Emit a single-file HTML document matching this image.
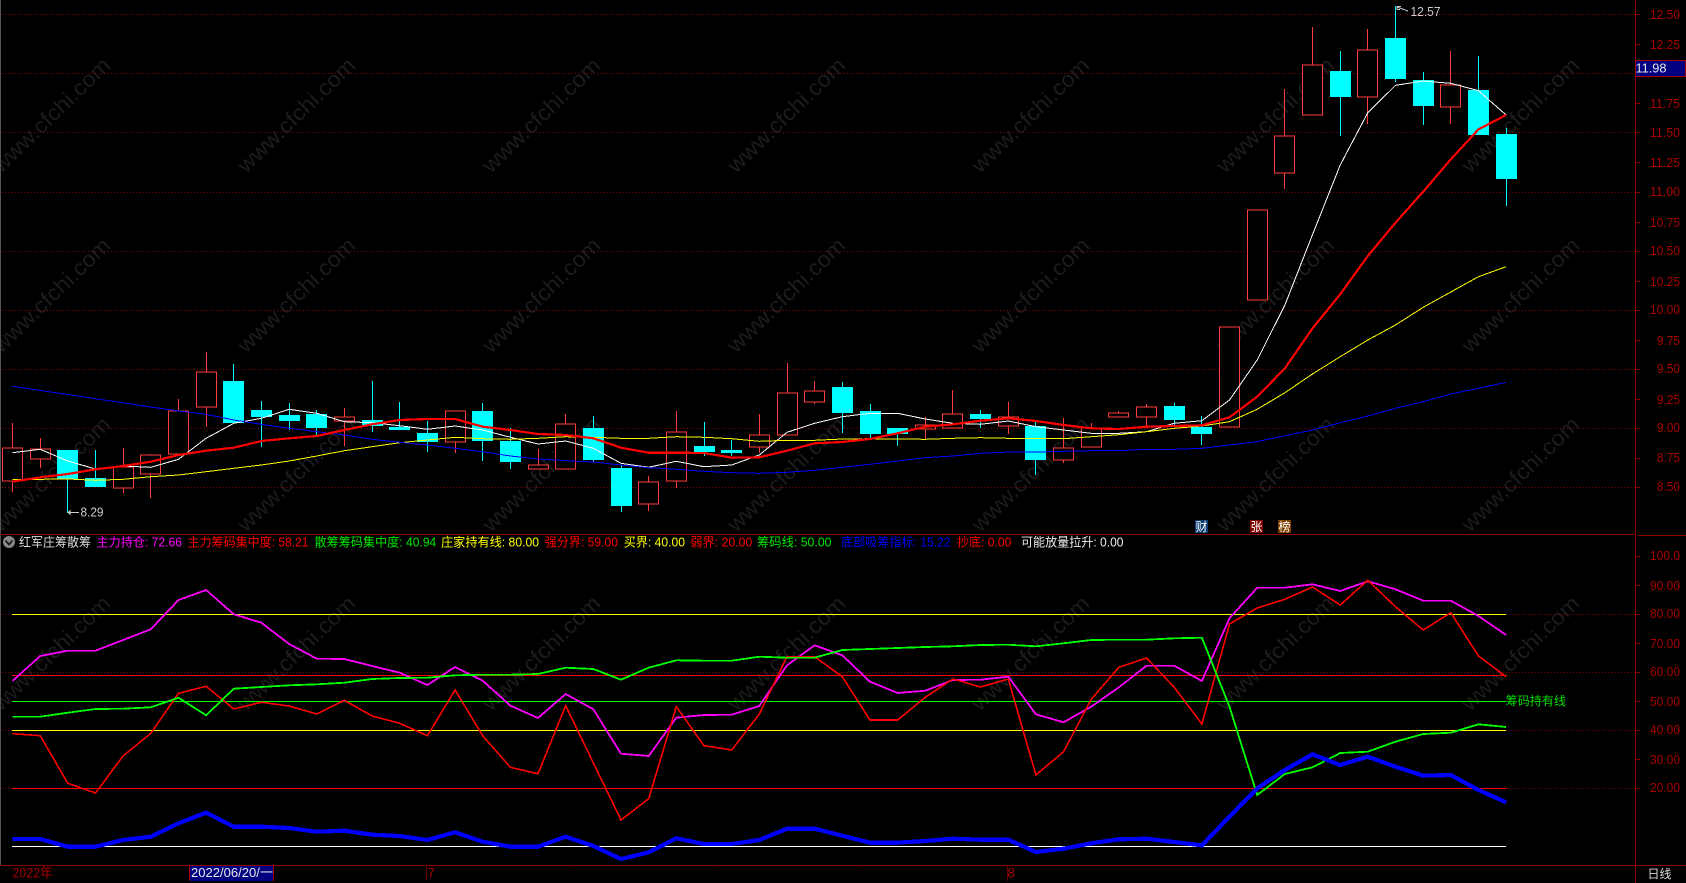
<!DOCTYPE html>
<html lang="zh">
<head>
<meta charset="utf-8">
<title>红军庄筹散筹</title>
<style>
html,body{margin:0;padding:0;background:#000;width:1686px;height:883px;overflow:hidden}
svg{display:block}
text{font-family:"Liberation Sans","Noto Sans CJK SC",sans-serif}
.wm text{font-size:22px;fill:#1c1c1c}
.ax text{font-size:13px;fill:#a80000;text-anchor:end}
.inf text{font-size:12.5px}
.tag text{font-size:12px;fill:#fff}
</style>
</head>
<body>
<svg width="1686" height="883" viewBox="0 0 1686 883" xmlns="http://www.w3.org/2000/svg">
<rect width="1686" height="883" fill="#000"/>

<!-- watermarks -->
<g class="wm">
<text transform="translate(1 174) rotate(-44)" textLength="154" lengthAdjust="spacingAndGlyphs">www.cfchi.com</text>
<text transform="translate(246 174) rotate(-44)" textLength="154" lengthAdjust="spacingAndGlyphs">www.cfchi.com</text>
<text transform="translate(491 174) rotate(-44)" textLength="154" lengthAdjust="spacingAndGlyphs">www.cfchi.com</text>
<text transform="translate(736 174) rotate(-44)" textLength="154" lengthAdjust="spacingAndGlyphs">www.cfchi.com</text>
<text transform="translate(980 174) rotate(-44)" textLength="154" lengthAdjust="spacingAndGlyphs">www.cfchi.com</text>
<text transform="translate(1225 174) rotate(-44)" textLength="154" lengthAdjust="spacingAndGlyphs">www.cfchi.com</text>
<text transform="translate(1470 174) rotate(-44)" textLength="154" lengthAdjust="spacingAndGlyphs">www.cfchi.com</text>
<text transform="translate(1 354) rotate(-44)" textLength="154" lengthAdjust="spacingAndGlyphs">www.cfchi.com</text>
<text transform="translate(246 354) rotate(-44)" textLength="154" lengthAdjust="spacingAndGlyphs">www.cfchi.com</text>
<text transform="translate(491 354) rotate(-44)" textLength="154" lengthAdjust="spacingAndGlyphs">www.cfchi.com</text>
<text transform="translate(736 354) rotate(-44)" textLength="154" lengthAdjust="spacingAndGlyphs">www.cfchi.com</text>
<text transform="translate(980 354) rotate(-44)" textLength="154" lengthAdjust="spacingAndGlyphs">www.cfchi.com</text>
<text transform="translate(1225 354) rotate(-44)" textLength="154" lengthAdjust="spacingAndGlyphs">www.cfchi.com</text>
<text transform="translate(1470 354) rotate(-44)" textLength="154" lengthAdjust="spacingAndGlyphs">www.cfchi.com</text>
<text transform="translate(1 533) rotate(-44)" textLength="154" lengthAdjust="spacingAndGlyphs">www.cfchi.com</text>
<text transform="translate(246 533) rotate(-44)" textLength="154" lengthAdjust="spacingAndGlyphs">www.cfchi.com</text>
<text transform="translate(491 533) rotate(-44)" textLength="154" lengthAdjust="spacingAndGlyphs">www.cfchi.com</text>
<text transform="translate(736 533) rotate(-44)" textLength="154" lengthAdjust="spacingAndGlyphs">www.cfchi.com</text>
<text transform="translate(980 533) rotate(-44)" textLength="154" lengthAdjust="spacingAndGlyphs">www.cfchi.com</text>
<text transform="translate(1225 533) rotate(-44)" textLength="154" lengthAdjust="spacingAndGlyphs">www.cfchi.com</text>
<text transform="translate(1470 533) rotate(-44)" textLength="154" lengthAdjust="spacingAndGlyphs">www.cfchi.com</text>
<text transform="translate(1 712) rotate(-44)" textLength="154" lengthAdjust="spacingAndGlyphs">www.cfchi.com</text>
<text transform="translate(246 712) rotate(-44)" textLength="154" lengthAdjust="spacingAndGlyphs">www.cfchi.com</text>
<text transform="translate(491 712) rotate(-44)" textLength="154" lengthAdjust="spacingAndGlyphs">www.cfchi.com</text>
<text transform="translate(736 712) rotate(-44)" textLength="154" lengthAdjust="spacingAndGlyphs">www.cfchi.com</text>
<text transform="translate(980 712) rotate(-44)" textLength="154" lengthAdjust="spacingAndGlyphs">www.cfchi.com</text>
<text transform="translate(1225 712) rotate(-44)" textLength="154" lengthAdjust="spacingAndGlyphs">www.cfchi.com</text>
<text transform="translate(1470 712) rotate(-44)" textLength="154" lengthAdjust="spacingAndGlyphs">www.cfchi.com</text>
</g>

<g shape-rendering="crispEdges" fill="none">
<!-- dotted grid -->
<path stroke="#8a0000" stroke-dasharray="1 2.2" d="M2 14.5H1635M2 73.5H1635M2 132.5H1635M2 192.5H1635M2 251.5H1635M2 310.5H1635M2 369.5H1635M2 428.5H1635M2 487.5H1635M2 614.5H1635M2 672.5H1635M2 730.5H1635M2 788.5H1635"/>

<!-- frame -->
<path stroke="#555" d="M0.5 0V865"/>
<path stroke="#8a0000" d="M0 534.5H1635M1638 535.5H1686M0 865.5H1686M1635.5 0V883"/>
<path stroke="#8a0000" d="M1635 14.5h5M1635 44.5h5M1635 103.5h5M1635 132.5h5M1635 162.5h5M1635 192.5h5M1635 222.5h5M1635 251.5h5M1635 281.5h5M1635 310.5h5M1635 340.5h5M1635 369.5h5M1635 399.5h5M1635 428.5h5M1635 458.5h5M1635 487.5h5M1635 556.5h5M1635 585.5h5M1635 614.5h5M1635 643.5h5M1635 672.5h5M1635 701.5h5M1635 730.5h5M1635 759.5h5M1635 788.5h5"/>
<path stroke="#6a0000" d="M426.5 866V881M1007.5 866V881M571.5 865v2M717.5 865v2M862.5 865v2"/>

<!-- red wicks -->
<path stroke="#ff3c3c" d="M12.5 423V448M12.5 481V492M40.5 438V449M40.5 459V468M123.5 448V467M123.5 488V493M150.5 454V455M150.5 474V498M178.5 399V411M206.5 352V372M206.5 407V427M344.5 408V417M344.5 421V446M455.5 442V453M538.5 449V465M565.5 414V424M648.5 476V482M648.5 504V511M676.5 411V432M676.5 481V488M759.5 414V435M759.5 447V453M787.5 363V393M814.5 381V391M814.5 402V404M925.5 417V425M925.5 429V439M952.5 390V414M1008.5 402V417M1008.5 426V434M1063.5 418V448M1063.5 460V463M1091.5 423V428M1118.5 411V413M1146.5 404V407M1146.5 417V427M1284.5 89V136M1284.5 173V189M1312.5 27V65M1367.5 29V50M1367.5 97V124M1450.5 51V85M1450.5 107V124"/>
<!-- red bodies -->
<path stroke="#ff3c3c" fill="#000" d="M2.5 448h20v33h-20zM30.5 449h20v10h-20zM113.5 467h20v21h-20zM140.5 455h20v19h-20zM168.5 411h20v43h-20zM196.5 372h20v35h-20zM334.5 417h20v4h-20zM445.5 411h20v31h-20zM528.5 465h20v4h-20zM555.5 424h20v45h-20zM638.5 482h20v22h-20zM666.5 432h20v49h-20zM749.5 435h20v12h-20zM777.5 393h20v42h-20zM804.5 391h20v11h-20zM915.5 425h20v4h-20zM942.5 414h20v14h-20zM998.5 417h20v9h-20zM1053.5 448h20v12h-20zM1081.5 428h20v19h-20zM1108.5 413h20v4h-20zM1136.5 407h20v10h-20zM1219.5 327h20v100h-20zM1247.5 210h20v90h-20zM1274.5 136h20v37h-20zM1302.5 65h20v50h-20zM1357.5 50h20v47h-20zM1440.5 85h20v22h-20z"/>
<!-- cyan wicks -->
<path stroke="#00ffff" d="M67.5 479V513M95.5 450V478M233.5 364V381M261.5 401V447M289.5 403V430M316.5 410V435M372.5 381V432M399.5 402V427M427.5 421V452M482.5 403V461M510.5 428V469M593.5 416V462M621.5 465V512M704.5 422V456M731.5 440V456M842.5 382V433M870.5 404V439M897.5 428V446M980.5 410V428M1035.5 422V475M1174.5 403V425M1201.5 416V445M1340.5 51V136M1395.5 6V82M1423.5 72V125M1478.5 56V90M1506.5 128V206"/>
<!-- cyan bodies -->
<path fill="#00ffff" d="M57 450h21v29h-21zM85 478h21v9h-21zM223 381h21v42h-21zM251 410h21v7h-21zM279 415h21v6h-21zM306 414h21v14h-21zM362 420h21v6h-21zM389 427h21v3h-21zM417 433h21v9h-21zM472 411h21v30h-21zM500 441h21v21h-21zM583 428h21v32h-21zM611 468h21v38h-21zM694 446h21v6h-21zM721 450h21v3h-21zM832 387h21v26h-21zM860 411h21v23h-21zM887 428h21v6h-21zM970 414h21v5h-21zM1025 426h21v34h-21zM1164 406h21v14h-21zM1191 427h21v7h-21zM1330 71h21v26h-21zM1385 38h21v41h-21zM1413 80h21v26h-21zM1468 90h21v45h-21zM1496 134h21v45h-21z"/>

<!-- MA lines top -->
<polyline stroke="#fff" stroke-width="1" points="12.5,452.7 40.2,449.3 67.8,461 95.5,469 123.1,466 150.8,467.3 178.5,459.3 206.1,438.3 233.8,423.3 261.4,418.3 289.1,409.3 316.8,413.3 344.4,421.7 372.1,422.7 399.7,425.7 427.4,429.3 455.1,426 482.7,430 510.4,437.3 538,444 565.7,441 593.4,448.3 621,463.3 648.7,467.3 676.3,461.3 704,466.7 731.7,465 759.3,455 787,432.3 814.6,423.3 842.3,416.7 870,413.3 897.6,413.3 925.3,419 952.9,423.3 980.6,424.3 1008.3,421 1035.9,426.7 1063.6,430 1091.2,433.3 1118.9,433.3 1146.6,431.7 1174.2,423.3 1201.9,420.7 1229.5,400 1257.2,360 1284.9,305 1312.5,234.7 1340.2,165 1367.8,112.7 1395.5,85.3 1423.2,81 1450.8,83.3 1478.5,90.7 1506.1,115"/>
<polyline stroke="#ffff00" stroke-width="1" points="12.5,479.3 40.2,479.3 67.8,479 95.5,480.3 123.1,479.3 150.8,476.7 178.5,475 206.1,471.7 233.8,468.3 261.4,465 289.1,461 316.8,456 344.4,450.7 372.1,446.7 399.7,442.7 427.4,440 455.1,437.3 482.7,438.7 510.4,439.3 538,438.3 565.7,436.7 593.4,437.3 621,438.3 648.7,438.3 676.3,436.7 704,437.3 731.7,438.7 759.3,441.3 787,440.3 814.6,440.3 842.3,439 870,438.7 897.6,439 925.3,439.3 952.9,438.3 980.6,437.7 1008.3,438.3 1035.9,438.7 1063.6,438.7 1091.2,436.7 1118.9,434.7 1146.6,431.7 1174.2,428.3 1201.9,426 1229.5,421.7 1257.2,409.3 1284.9,392.7 1312.5,374 1340.2,356.7 1367.8,340 1395.5,325 1423.2,307.3 1450.8,292 1478.5,276.7 1506.1,266.7"/>
<polyline stroke="#0000ff" stroke-width="1" points="12.5,386.3 40.2,390.4 67.8,394.5 95.5,398.7 123.1,402.8 150.8,407 178.5,411 206.1,414.3 233.8,420 261.4,424.3 289.1,428.3 316.8,431.7 344.4,435 372.1,439.3 399.7,442.3 427.4,445 455.1,448.3 482.7,451.7 510.4,456 538,459 565.7,460.7 593.4,462 621,465 648.7,467.7 676.3,469.3 704,471.3 731.7,472.7 759.3,473.3 787,472.3 814.6,470.3 842.3,467.3 870,464.3 897.6,461 925.3,457.7 952.9,456 980.6,453.3 1008.3,452 1035.9,452 1063.6,451.3 1091.2,450.7 1118.9,450.7 1146.6,449.3 1174.2,449.3 1201.9,448.3 1229.5,445 1257.2,441.7 1284.9,435.7 1312.5,430 1340.2,422.7 1367.8,416 1395.5,408.3 1423.2,401.7 1450.8,394 1478.5,388.3 1506.1,382.3"/>
<polyline stroke="#ff0000" stroke-width="2.2" stroke-linejoin="round" points="12.5,481.7 40.2,477.3 67.8,474 95.5,469.3 123.1,466 150.8,461.7 178.5,455 206.1,450.7 233.8,447.7 261.4,441 289.1,438.3 316.8,436 344.4,430 372.1,424.3 399.7,420 427.4,419 455.1,419 482.7,426.7 510.4,430 538,434 565.7,435 593.4,438.3 621,447.7 648.7,452.7 676.3,452.7 704,453 731.7,457.7 759.3,457.3 787,450.7 814.6,443.3 842.3,442 870,439 897.6,433.3 925.3,426.7 952.9,424.3 980.6,420.7 1008.3,418.3 1035.9,421 1063.6,425 1091.2,428.3 1118.9,429 1146.6,426.7 1174.2,426 1201.9,425.3 1229.5,417.3 1257.2,396.7 1284.9,368.3 1312.5,328.3 1340.2,294.3 1367.8,256 1395.5,222.7 1423.2,191.7 1450.8,159.3 1478.5,129.3 1506.1,115"/>

<!-- lower panel horizontals -->
<path stroke="#ffff00" d="M12 614.5H1506M12 730.5H1506"/>
<path stroke="#ff0000" d="M12 675.5H1506M12 788.5H1506"/>
<path stroke="#00ff00" d="M12 701.5H1506"/>
<path stroke="#ffffff" d="M12 846.5H1506"/>

<!-- lower panel curves -->
<polyline stroke="#ff00ff" stroke-width="1.8" points="12.5,681 40.2,656 67.8,650.7 95.5,650.7 123.1,640 150.8,629.3 178.5,600 206.1,590 233.8,614.3 261.4,622.7 289.1,644 316.8,658.7 344.4,659 372.1,666 399.7,672.7 427.4,685 455.1,667 482.7,680.7 510.4,705.7 538,718 565.7,694 593.4,709.3 621,753.7 648.7,756 676.3,717.7 704,715 731.7,714.7 759.3,706 787,665.3 814.6,645.3 842.3,655.3 870,681.7 897.6,693 925.3,690.7 952.9,680 980.6,679.7 1008.3,676.7 1035.9,714.3 1063.6,722.3 1091.2,706.7 1118.9,687.3 1146.6,665.7 1174.2,665.7 1201.9,681 1229.5,618.3 1257.2,587.7 1284.9,587.7 1312.5,584.3 1340.2,591 1367.8,581.3 1395.5,589.3 1423.2,600.7 1450.8,600.7 1478.5,616 1506.1,635"/>
<polyline stroke="#ff0000" stroke-width="1.6" points="12.5,733.7 40.2,735.7 67.8,783.3 95.5,793 123.1,756 150.8,733.3 178.5,693.3 206.1,686.3 233.8,709 261.4,702.3 289.1,706 316.8,714 344.4,700.3 372.1,716 399.7,723.3 427.4,735.7 455.1,690 482.7,735.7 510.4,767.3 538,773.7 565.7,705.7 593.4,763 621,820 648.7,798.7 676.3,706.7 704,745.7 731.7,750 759.3,714 787,656.7 814.6,656.7 842.3,676.7 870,720 897.6,720 925.3,697.3 952.9,679 980.6,687 1008.3,679 1035.9,775 1063.6,751.7 1091.2,699.3 1118.9,667.3 1146.6,658 1174.2,687.3 1201.9,724 1229.5,624 1257.2,608 1284.9,599.3 1312.5,587 1340.2,605 1367.8,580.3 1395.5,606.7 1423.2,630 1450.8,612.7 1478.5,656 1506.1,676.7"/>
<polyline stroke="#00ff00" stroke-width="1.8" points="12.5,716.7 40.2,716.7 67.8,712.7 95.5,709 123.1,708.7 150.8,707.3 178.5,697.7 206.1,715.3 233.8,688.7 261.4,687 289.1,685.3 316.8,684.3 344.4,682.7 372.1,679 399.7,678 427.4,677.7 455.1,675.3 482.7,674.7 510.4,674.7 538,674 565.7,667.7 593.4,669 621,679.7 648.7,667.7 676.3,660.3 704,660.7 731.7,660.7 759.3,656.7 787,657.7 814.6,657.7 842.3,650 870,649 897.6,648 925.3,647 952.9,646.3 980.6,645 1008.3,644.7 1035.9,646.3 1063.6,643.3 1091.2,640 1118.9,639.7 1146.6,639.7 1174.2,638.3 1201.9,637.7 1229.5,706.7 1257.2,795 1284.9,774 1312.5,767.3 1340.2,753 1367.8,751.7 1395.5,741.7 1423.2,734 1450.8,732.7 1478.5,724.3 1506.1,727"/>
<polyline stroke="#0000ff" stroke-width="4.2" points="12.5,839 40.2,839 67.8,846.7 95.5,846.7 123.1,840 150.8,836.7 178.5,823.3 206.1,812.7 233.8,826.7 261.4,826.7 289.1,828 316.8,831.7 344.4,830.7 372.1,834.7 399.7,836 427.4,840 455.1,832.3 482.7,841.7 510.4,846.7 538,846.7 565.7,836.7 593.4,846 621,859 648.7,852.3 676.3,838.3 704,844 731.7,844 759.3,840 787,828.7 814.6,828.7 842.3,835.7 870,842.7 897.6,842.7 925.3,841 952.9,838.7 980.6,839.7 1008.3,839.7 1035.9,852 1063.6,848.7 1091.2,843.3 1118.9,839.3 1146.6,838.7 1174.2,842 1201.9,845.3 1229.5,816.7 1257.2,788.3 1284.9,770 1312.5,754.3 1340.2,765 1367.8,756.7 1395.5,766.7 1423.2,775.7 1450.8,775 1478.5,790 1506.1,802.3"/>

<!-- price box -->
<rect x="1635.5" y="60.5" width="50" height="16" fill="#000080" stroke="#a80000"/>
<!-- date box -->
<rect x="189.5" y="866" width="84" height="15" fill="#000080"/>
<path stroke="#a80000" d="M189.5 866V881M273.5 866V881"/>

<!-- extremes arrows -->
<path stroke="#cccccc" d="M68 512.5H79M68 512.5l3-2M68 512.5l3 2M1397 7L1408 11M1397 6.5h4M1397 6.5v3M1397 9.5h3"/>

<!-- tags -->
<rect x="1195" y="520" width="13" height="13" fill="#0a3c70"/>
<rect x="1250" y="520" width="13" height="13" fill="#800000"/>
<rect x="1278" y="520" width="13" height="13" fill="#804000"/>
</g>

<g class="tag">
<text x="1195.5" y="531">财</text>
<text x="1250.5" y="531">张</text>
<text x="1278.5" y="531">榜</text>
</g>

<!-- axis labels upper -->
<g class="ax">
<text x="1680" y="19" textLength="30" lengthAdjust="spacingAndGlyphs">12.50</text>
<text x="1680" y="49" textLength="30" lengthAdjust="spacingAndGlyphs">12.25</text>
<text x="1680" y="108" textLength="30" lengthAdjust="spacingAndGlyphs">11.75</text>
<text x="1680" y="137" textLength="30" lengthAdjust="spacingAndGlyphs">11.50</text>
<text x="1680" y="167" textLength="30" lengthAdjust="spacingAndGlyphs">11.25</text>
<text x="1680" y="196" textLength="30" lengthAdjust="spacingAndGlyphs">11.00</text>
<text x="1680" y="227" textLength="30" lengthAdjust="spacingAndGlyphs">10.75</text>
<text x="1680" y="255" textLength="30" lengthAdjust="spacingAndGlyphs">10.50</text>
<text x="1680" y="286" textLength="30" lengthAdjust="spacingAndGlyphs">10.25</text>
<text x="1680" y="314" textLength="30" lengthAdjust="spacingAndGlyphs">10.00</text>
<text x="1680" y="345" textLength="23" lengthAdjust="spacingAndGlyphs">9.75</text>
<text x="1680" y="373" textLength="23" lengthAdjust="spacingAndGlyphs">9.50</text>
<text x="1680" y="404" textLength="23" lengthAdjust="spacingAndGlyphs">9.25</text>
<text x="1680" y="432" textLength="23" lengthAdjust="spacingAndGlyphs">9.00</text>
<text x="1680" y="462" textLength="23" lengthAdjust="spacingAndGlyphs">8.75</text>
<text x="1680" y="491" textLength="23" lengthAdjust="spacingAndGlyphs">8.50</text>
<text x="1680" y="560" textLength="30" lengthAdjust="spacingAndGlyphs">100.0</text>
<text x="1680" y="590" textLength="30" lengthAdjust="spacingAndGlyphs">90.00</text>
<text x="1680" y="618" textLength="30" lengthAdjust="spacingAndGlyphs">80.00</text>
<text x="1680" y="648" textLength="30" lengthAdjust="spacingAndGlyphs">70.00</text>
<text x="1680" y="676" textLength="30" lengthAdjust="spacingAndGlyphs">60.00</text>
<text x="1680" y="706" textLength="30" lengthAdjust="spacingAndGlyphs">50.00</text>
<text x="1680" y="734" textLength="30" lengthAdjust="spacingAndGlyphs">40.00</text>
<text x="1680" y="764" textLength="30" lengthAdjust="spacingAndGlyphs">30.00</text>
<text x="1680" y="792" textLength="30" lengthAdjust="spacingAndGlyphs">20.00</text>
</g>
<text x="1635.5" y="72.5" font-size="13" fill="#e8e8e8" textLength="31" lengthAdjust="spacingAndGlyphs">11.98</text>

<!-- annotations -->
<text x="80.5" y="516.5" font-size="13" fill="#cccccc" textLength="23" lengthAdjust="spacingAndGlyphs">8.29</text>
<text x="1410.5" y="16" font-size="13" fill="#cccccc" textLength="30" lengthAdjust="spacingAndGlyphs">12.57</text>
<text x="1505.5" y="705" font-size="12" fill="#00e000" textLength="60.5" lengthAdjust="spacingAndGlyphs">筹码持有线</text>

<!-- indicator header -->
<circle cx="9" cy="542" r="6" fill="#888"/>
<path d="M5.5 540.5L9 544.5L12.5 540.5" fill="none" stroke="#111" stroke-width="1.6"/>
<g class="inf">
<text x="19" y="546.5" fill="#dddddd" textLength="72" lengthAdjust="spacingAndGlyphs">红军庄筹散筹</text>
<text x="96.5" y="546.5" fill="#ff00ff" textLength="85.5" lengthAdjust="spacingAndGlyphs">主力持仓: 72.66</text>
<text x="187.5" y="546.5" fill="#ff0000" textLength="121" lengthAdjust="spacingAndGlyphs">主力筹码集中度: 58.21</text>
<text x="314.5" y="546.5" fill="#00e800" textLength="121.8" lengthAdjust="spacingAndGlyphs">散筹筹码集中度: 40.94</text>
<text x="441" y="546.5" fill="#ffff00" textLength="98" lengthAdjust="spacingAndGlyphs">庄家持有线: 80.00</text>
<text x="544.6" y="546.5" fill="#ff0000" textLength="73.4" lengthAdjust="spacingAndGlyphs">强分界: 59.00</text>
<text x="623.7" y="546.5" fill="#ffff00" textLength="61.3" lengthAdjust="spacingAndGlyphs">买界: 40.00</text>
<text x="690.3" y="546.5" fill="#ff0000" textLength="62" lengthAdjust="spacingAndGlyphs">弱界: 20.00</text>
<text x="757" y="546.5" fill="#00e800" textLength="74.5" lengthAdjust="spacingAndGlyphs">筹码线: 50.00</text>
<text x="841" y="546.5" fill="#0000ff" textLength="109.5" lengthAdjust="spacingAndGlyphs">底部吸筹指标: 15.22</text>
<text x="956.7" y="546.5" fill="#ff0000" textLength="54.7" lengthAdjust="spacingAndGlyphs">抄底: 0.00</text>
<text x="1021" y="546.5" fill="#eeeeee" textLength="102.5" lengthAdjust="spacingAndGlyphs">可能放量拉升: 0.00</text>
</g>

<!-- date row -->
<text x="12.5" y="877.5" font-size="13.5" fill="#a80000" textLength="40" lengthAdjust="spacingAndGlyphs">2022年</text>
<text x="191" y="877" font-size="13" fill="#e8e8e8" textLength="82" lengthAdjust="spacingAndGlyphs">2022/06/20/一</text>
<text x="427.5" y="877.5" font-size="13.5" fill="#a80000">7</text>
<text x="1007.5" y="877.5" font-size="13.5" fill="#a80000">8</text>
<text x="1647.5" y="878" font-size="12" fill="#dddddd" textLength="24" lengthAdjust="spacingAndGlyphs">日线</text>
</svg>
</body>
</html>
